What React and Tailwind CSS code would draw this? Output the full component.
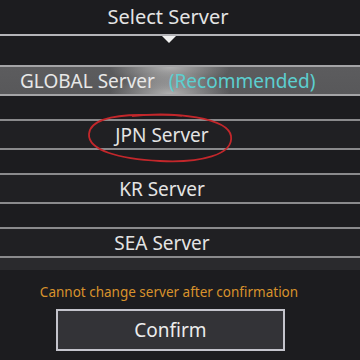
export default function App() {
  const font = { fontFamily: '"Noto Sans", "Open Sans", sans-serif' };
  const rows = ["JPN Server", "KR Server", "SEA Server"];
  return (
    <div
      className="w-[360px] h-[360px] overflow-hidden bg-[#1c1c1f] relative text-[#e6e6e6]"
      style={font}
    >
      {/* title */}
      <div className="h-[34px] pt-[3px] flex justify-center">
        <span className="ml-[-24px] text-[20px] leading-[28px] text-[#e4e4e4]">Select Server</span>
      </div>
      <div className="h-[2px] bg-[#b4b4b8]" />
      <div className="h-[29px] pl-[162px]">
        <div className="w-0 h-0 border-l-[7px] border-r-[7px] border-t-[7px] border-l-transparent border-r-transparent border-t-[#f2f2f2]" />
      </div>

      {/* global row */}
      <div className="h-[31px] border-y-2 border-[#a4a4a6] bg-[radial-gradient(ellipse_60px_22px_at_170px_0px,#b0b0b0,transparent),radial-gradient(ellipse_60px_22px_at_170px_100%,#b0b0b0,transparent),linear-gradient(#5c5c5e,#58585a)] flex items-center pl-[20px]">
        <span className="text-[19px] leading-[26px] text-[#e8e8e8]">GLOBAL Server</span>
        <span className="ml-[14px] text-[19px] leading-[26px] text-[#5ccfd0]">(Recommended)</span>
      </div>

      <div className="flex flex-col gap-[23px] mt-[23px]">
        {rows.map((r) => (
          <div
            key={r}
            className="h-[31px] border-y-2 border-[#8a8a8c] bg-[#202023] flex items-center justify-center pr-[36px]"
          >
            <span className="text-[19px] leading-[26px] text-[#e4e4e4]">{r}</span>
          </div>
        ))}
      </div>
      <div className="h-[12px] bg-[#2a2a2d]" />

      {/* warning */}
      <div className="mt-[13px] flex justify-center pr-[22px]">
        <span className="text-[13.5px] leading-[18px] text-[#d8922c]">
          Cannot change server after confirmation
        </span>
      </div>

      {/* button */}
      <div className="mt-[8px] pl-[56px]">
        <div className="w-[229px] h-[42px] border-2 border-[#c4c4cc] bg-[#333337] flex items-center justify-center">
          <span className="text-[19px] leading-[26px] text-[#ececec]">Confirm</span>
        </div>
      </div>

      {/* red annotation */}
      <svg className="absolute left-0 top-0 pointer-events-none" width="360" height="360">
        <path
          d="M132 116 C 175 111, 228 118, 231 136 C 234 155, 200 163, 160 161 C 118 159, 88 150, 89 134 C 90 121, 110 115, 140 115 C 160 115, 175 114, 182 116"
          fill="none"
          stroke="#c3272b"
          strokeWidth="1.8"
        />
      </svg>
    </div>
  );
}
